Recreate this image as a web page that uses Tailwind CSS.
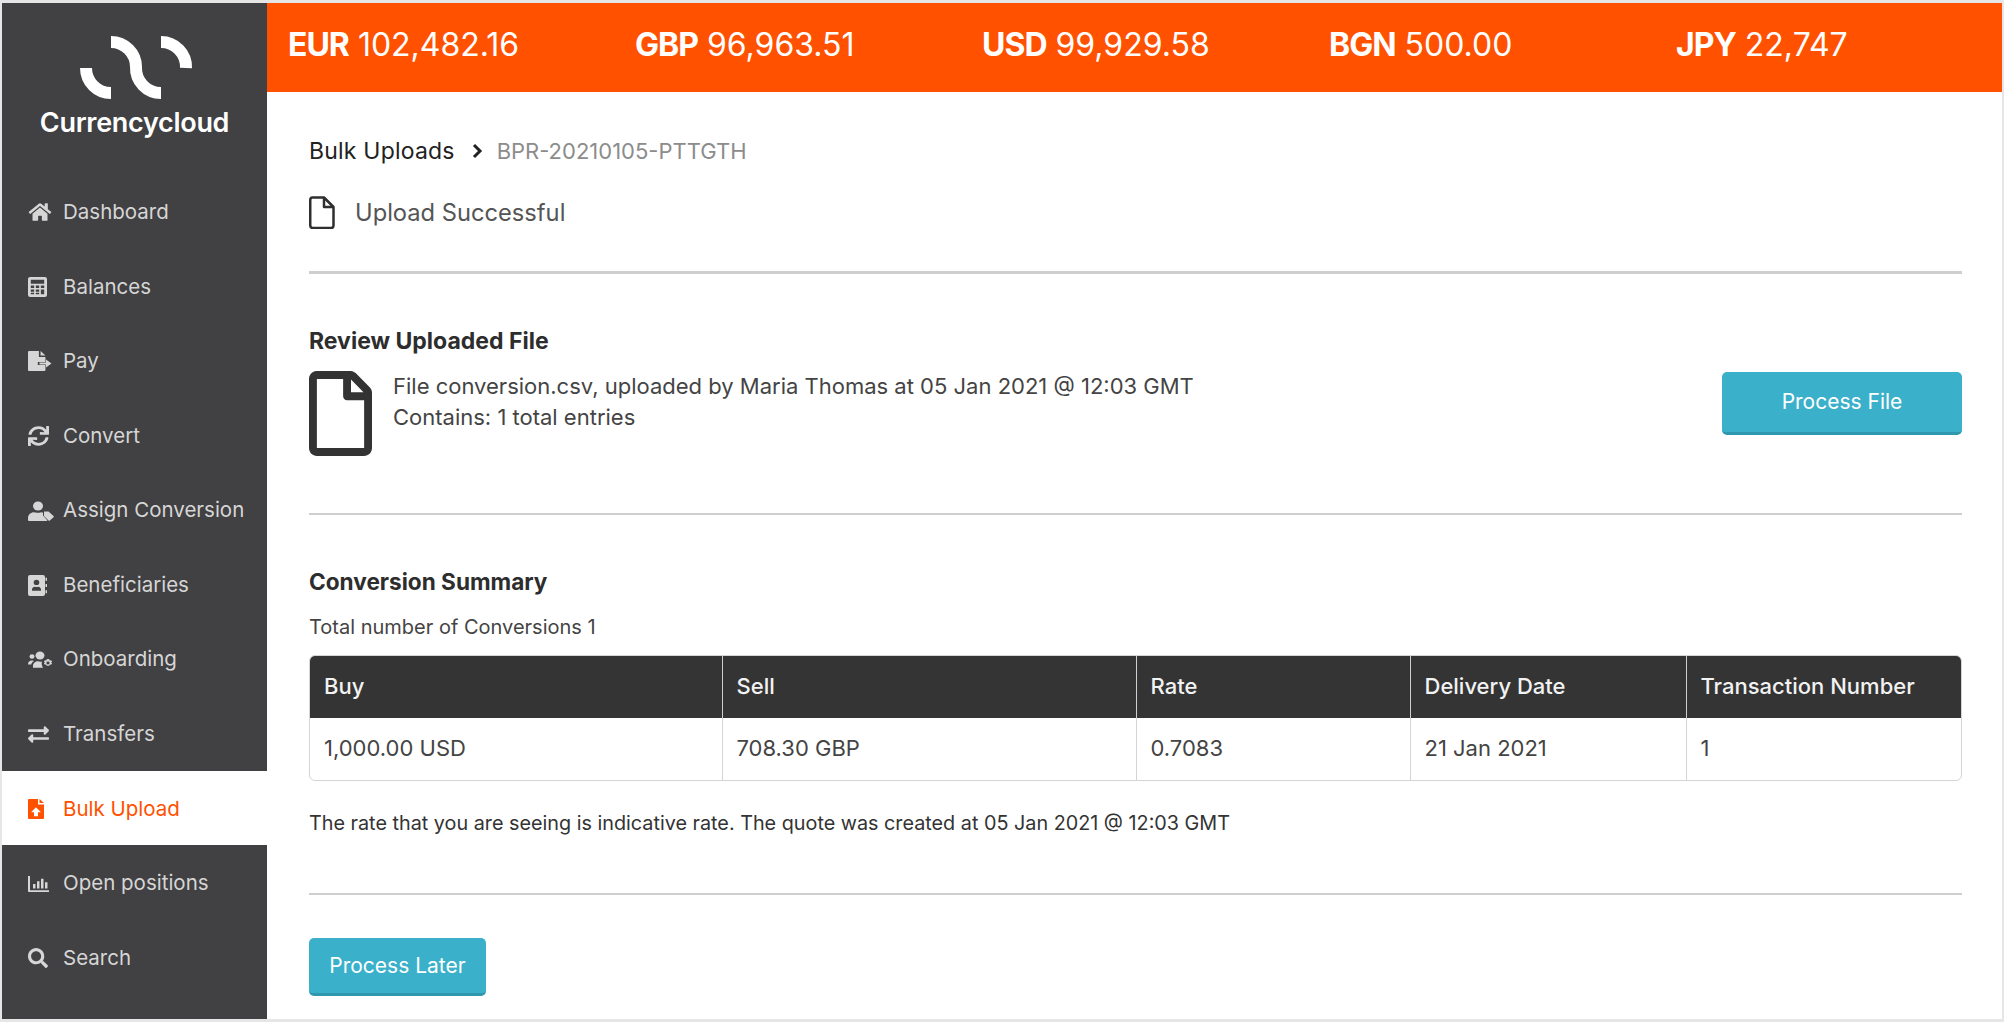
<!DOCTYPE html>
<html lang="en">
<head>
    <meta charset="UTF-8">
    <title>Bulk Upload</title>
    <script src="https://cdn.jsdelivr.net/npm/@tailwindcss/browser@4"></script>
</head>
<body class="bg-[#e6e6e6] font-['Inter',sans-serif] text-[#333]">
<div class="flex h-screen w-full overflow-hidden pt-[3px] pb-[3px] px-[2px]">

    <!-- Sidebar -->
    <aside class="w-[265px] shrink-0 bg-[#414042] flex flex-col text-[#d6d6d6]">
        <div class="h-[171px] flex flex-col items-center shrink-0">
            <svg class="mt-[32px] ml-[2px]" width="114" height="65" viewBox="78 35 114 65" fill="none" stroke="#fff" stroke-width="12">
                <path d="M85 68A25 25 0 0 0 110 93"/>
                <path d="M110 42A25 25 0 0 1 135 67A25 25 0 0 0 160 93"/>
                <path d="M160 42A25 25 0 0 1 185 68"/>
            </svg>
            <div class="mt-[5px] text-[27px] leading-[36px] font-semibold text-white tracking-[-0.3px]">Currencycloud</div>
        </div>
        <nav class="flex flex-col text-[20.5px]">
            <a class="h-[74.6px] flex items-center pl-[26px] pt-[2px]">
                <svg class="w-[24px] h-[20px] mr-[11px]" viewBox="0 0 576 512" fill="currentColor"><path d="M280.37 148.26L96 300.11V464a16 16 0 0 0 16 16l112.06-.29a16 16 0 0 0 15.92-16V368a16 16 0 0 1 16-16h64a16 16 0 0 1 16 16v95.64a16 16 0 0 0 16 16.05L464 480a16 16 0 0 0 16-16V300L295.67 148.26a12.19 12.19 0 0 0-15.3 0zM571.6 251.47L488 182.56V44.05a12 12 0 0 0-12-12h-56a12 12 0 0 0-12 12v72.61L318.47 43a48 48 0 0 0-61 0L4.34 251.47a12 12 0 0 0-1.6 16.9l25.5 31A12 12 0 0 0 45.15 301l235.22-193.74a12.19 12.19 0 0 1 15.3 0L530.9 301a12 12 0 0 0 16.9-1.6l25.5-31a12 12 0 0 0-1.7-16.93z"/></svg>
                Dashboard</a>
            <a class="h-[74.6px] flex items-center pl-[26px] pt-[2px]">
                <svg class="w-[19px] h-[20px] mr-[16px]" viewBox="2 0 17 21" preserveAspectRatio="none" fill="currentColor"><path fill-rule="evenodd" d="M4 0h13a2 2 0 0 1 2 2v17a2 2 0 0 1-2 2H4a2 2 0 0 1-2-2V2a2 2 0 0 1 2-2zM4.500 3v4h12V3zM4.500 9v2.500h3V9zM9 9v2.500h3V9zM13.500 9v2.500h3V9zM4.500 13v2.500h3V13zM9 13v2.500h3V13zM13.500 13v5h3v-5zM4.500 16.500V18h3v-1.500zM9 16.500V18h3v-1.500z"/></svg>
                Balances</a>
            <a class="h-[74.6px] flex items-center pl-[26px] pt-[2px]">
                <svg class="w-[24px] h-[22px] mr-[11px]" viewBox="2 0 22 22" preserveAspectRatio="none" fill="currentColor"><path d="M2 2a1 1 0 0 1 1-1h9v6h6v5h-7v3h7v5a1 1 0 0 1-1 1H3a1 1 0 0 1-1-1zM13.500 1l4.500 4.500h-4.500zM12.500 12.500h6V9.500l5 4-5 4v-3h-6z"/></svg>
                Pay</a>
            <a class="h-[74.6px] flex items-center pl-[26px] pt-[2px]">
                <svg class="w-[21px] h-[20px] mr-[14px]" viewBox="0 0 512 512" preserveAspectRatio="none" fill="currentColor"><path d="M440.65 12.57l4 82.77A247.16 247.16 0 0 0 255.83 8C134.73 8 33.91 94.92 12.29 209.82A12 12 0 0 0 24.09 224h49.05a12 12 0 0 0 11.67-9.26 175.91 175.91 0 0 1 317-56.94l-101.46-4.86a12 12 0 0 0-12.57 12v47.41a12 12 0 0 0 12 12H500a12 12 0 0 0 12-12V12a12 12 0 0 0-12-12h-47.37a12 12 0 0 0-11.98 12.57zM255.83 432a175.61 175.61 0 0 1-146-77.8l101.8 4.87a12 12 0 0 0 12.57-12v-47.4a12 12 0 0 0-12-12H12a12 12 0 0 0-12 12V500a12 12 0 0 0 12 12h47.35a12 12 0 0 0 12-12.6l-4.15-82.57A247.17 247.17 0 0 0 255.83 504c121.11 0 221.93-86.92 243.55-201.82a12 12 0 0 0-11.8-14.18h-49.05a12 12 0 0 0-11.67 9.26A175.86 175.86 0 0 1 255.83 432z"/></svg>
                Convert</a>
            <a class="h-[74.6px] flex items-center pl-[26px] pt-[2px]">
                <svg class="w-[26px] h-[20px] mr-[9px]" viewBox="0 0 26 22" preserveAspectRatio="none" fill="currentColor"><circle cx="10" cy="5.500" r="5"/><path d="M1 22a1 1 0 0 1-1-1v-2c0-4 3-6.500 6-6.500 1.500.6 6.500.6 8 0l1 .5v3l4.500 5.500-1 .5z"/><path d="M16 11.500h4.500l5 5a1 1 0 0 1 0 1.400l-3.600 3.600a1 1 0 0 1-1.400 0l-4.500-5z"/></svg>
                Assign Conversion</a>
            <a class="h-[74.6px] flex items-center pl-[26px] pt-[2px]">
                <svg class="w-[19px] h-[21px] mr-[16px]" viewBox="2 0 19 22" preserveAspectRatio="none" fill="currentColor"><path fill-rule="evenodd" d="M4 0h13a2 2 0 0 1 2 2v18a2 2 0 0 1-2 2H4a2 2 0 0 1-2-2V2a2 2 0 0 1 2-2zM10.500 5a2.800 2.800 0 1 0 0 5.600 2.800 2.800 0 0 0 0-5.600zM6 16.500h9v-1.300c0-1.700-1.500-3-3-3-.9.400-2.100.400-3 0-1.500 0-3 1.300-3 3z"/><path d="M19.500 3h1.500v3h-1.500zM19.500 9.500h1.500v3h-1.500zM19.500 16h1.500v3h-1.500z"/></svg>
                Beneficiaries</a>
            <a class="h-[74.6px] flex items-center pl-[26px] pt-[2px]">
                <svg class="w-[26px] h-[18px] mr-[9px]" viewBox="0 0 26 20" preserveAspectRatio="none" fill="currentColor"><circle cx="12" cy="5" r="4.500"/><circle cx="4" cy="6" r="2.500"/><path d="M0 15c0-3 1.500-4.500 4-4.500 1 0 1.500.3 2 .7-1.500 1-2.500 2.500-2.800 3.800z"/><path d="M5 18.500v-2c0-3 2.500-5 5-5 1.500.6 3 .6 4 .3-.5 2-.5 4.500 1 6.700z"/><path fill-rule="evenodd" d="M20 9l1.300.3.400 1.300 1.400-.4 1 1.500-1 1 1 1-1 1.600-1.400-.4-.4 1.400-1.300.2-1.300-.2-.4-1.400-1.400.4-1-1.600 1-1-1-1 1-1.500 1.400.4.400-1.300zM20 11.700a1.600 1.600 0 1 0 0 3.200 1.600 1.600 0 0 0 0-3.200z"/></svg>
                Onboarding</a>
            <a class="h-[74.6px] flex items-center pl-[26px] pt-[2px]">
                <svg class="w-[21px] h-[21px] mr-[14px]" viewBox="0 0 512 512" fill="currentColor"><path d="M0 168v-16c0-13.255 10.745-24 24-24h360V80c0-21.367 25.899-32.042 40.971-16.971l80 80c9.372 9.373 9.372 24.569 0 33.941l-80 80C409.956 271.982 384 261.456 384 240v-48H24c-13.255 0-24-10.745-24-24zm488 152H128v-48c0-21.314-25.862-32.08-40.971-16.971l-80 80c-9.372 9.373-9.372 24.569 0 33.941l80 80C102.057 463.997 128 453.437 128 432v-48h360c13.255 0 24-10.745 24-24v-16c0-13.255-10.745-24-24-24z"/></svg>
                Transfers</a>
            <a class="h-[74.6px] flex items-center pl-[26px] pt-[2px] bg-white text-[#ff5100]">
                <svg class="w-[16px] h-[20px] mr-[19px]" viewBox="2 0 16 22" preserveAspectRatio="none" fill="currentColor"><path fill-rule="evenodd" d="M3 0h9v6h6v15a1 1 0 0 1-1 1H3a1 1 0 0 1-1-1V1a1 1 0 0 1 1-1zM10 9l-5 5.500h3V19h4v-4.500h3z"/><path d="M13.500 0L18 4.500h-4.500z"/></svg>
                Bulk Upload</a>
            <a class="h-[74.6px] flex items-center pl-[26px] pt-[2px]">
                <svg class="w-[21px] h-[16px] mr-[14px]" viewBox="1 1 21 18" preserveAspectRatio="none" fill="currentColor"><path d="M1 1h2v16h19v2H2a1 1 0 0 1-1-1z"/><path d="M6 10h2.500v5H6zM10 7h2.500v8H10zM14 4h2.500v11H14zM18 8h2.500v7H18z"/></svg>
                Open positions</a>
            <a class="h-[74.6px] flex items-center pl-[26px] pt-[2px]">
                <svg class="w-[20px] h-[20px] mr-[15px]" viewBox="0 0 512 512" fill="currentColor"><path d="M505 442.7L405.3 343c-4.500-4.500-10.600-7-17-7H372c27.600-35.300 44-79.700 44-128C416 93.100 322.900 0 208 0S0 93.100 0 208s93.100 208 208 208c48.300 0 92.700-16.400 128-44v16.300c0 6.400 2.500 12.500 7 17l99.700 99.700c9.400 9.400 24.600 9.400 33.900 0l28.300-28.300c9.400-9.400 9.400-24.600.1-34zM208 336c-70.700 0-128-57.200-128-128 0-70.700 57.200-128 128-128 70.700 0 128 57.200 128 128 0 70.700-57.200 128-128 128z"/></svg>
                Search</a>
        </nav>
    </aside>

    <!-- Main -->
    <main class="flex-1 bg-white flex flex-col min-w-0">
        <!-- Balances -->
        <header class="h-[89px] shrink-0 bg-[#ff5100] text-white grid grid-cols-5 items-center text-[32px] leading-[40px] pb-[5px]">
            <div class="pl-[21px]"><b class="font-bold tracking-[-1px]">EUR</b> 102,482.16</div>
            <div class="pl-[21px]"><b class="font-bold tracking-[-1px]">GBP</b> 96,963.51</div>
            <div class="pl-[21px]"><b class="font-bold tracking-[-1px]">USD</b> 99,929.58</div>
            <div class="pl-[21px]"><b class="font-bold tracking-[-1px]">BGN</b> 500.00</div>
            <div class="pl-[21px]"><b class="font-bold tracking-[-1px]">JPY</b> 22,747</div>
        </header>

        <div class="pl-[42px] pr-[40px] pt-[44px]">
            <!-- Breadcrumb -->
            <div class="flex items-center h-[30px]">
                <span class="text-[23px] tracking-[0.2px] text-[#222]">Bulk Uploads</span>
                <svg class="w-[12px] h-[16px] ml-[16px] mr-[14px]" viewBox="0 0 12 16" fill="none" stroke="#222" stroke-width="3"><path d="M3 2l6 6-6 6"/></svg>
                <span class="text-[22px] text-[#8c8c8c]">BPR-20210105-PTTGTH</span>
            </div>
            <div class="flex items-center mt-[30px] h-[33px]">
                <svg class="w-[26px] h-[33px]" viewBox="0 0 26 33" fill="none" stroke="#2f2f2f" stroke-width="2.500" stroke-linejoin="round"><path d="M3.500 1.500h11.500l9.500 9.500v18.500a2.500 2.500 0 0 1-2.500 2.500H3.500A2.500 2.500 0 0 1 1.250 29.500V4a2.500 2.500 0 0 1 2.250-2.500z"/><path d="M15 1.500v9.500h9.500"/></svg>
                <span class="ml-[20px] text-[23.7px] text-[#555]">Upload Successful</span>
            </div>
            <div class="mt-[42px] h-[2.500px] bg-[#cfcfcf]"></div>

            <!-- Review file -->
            <h2 class="mt-[52px] text-[23px] leading-[30px] font-bold text-[#2d2d2d]">Review Uploaded File</h2>
            <div class="mt-[15px] flex justify-between h-[85px]">
                <div class="flex">
                    <svg class="w-[63px] h-[85px]" viewBox="0 0 384 512" preserveAspectRatio="none" fill="#333"><path d="M369.900 97.900L286 14C277 5 264.800-.1 252.100-.1H48C21.500 0 0 21.500 0 48v416c0 26.500 21.500 48 48 48h288c26.500 0 48-21.500 48-48V131.900c0-12.700-5.100-25-14.100-34zM332.100 128H256V51.900l76.100 76.100zM48 464V48h160v104c0 13.300 10.700 24 24 24h104v288H48z"/></svg>
                    <div class="ml-[21px] text-[22px] leading-[31px] text-[#444]">
                        <p>File conversion.csv, uploaded by Maria Thomas at 05 Jan 2021 @ 12:03 GMT</p>
                        <p>Contains: 1 total entries</p>
                    </div>
                </div>
                <button class="w-[240px] h-[63px] mt-[1px] bg-[#3ab0ca] text-white text-[21px] rounded-[5px] border-b-[3px] border-[#2f97ae]">Process File</button>
            </div>
            <div class="mt-[57px] h-[2.500px] bg-[#cfcfcf]"></div>

            <!-- Summary -->
            <h2 class="mt-[52px] text-[22.6px] leading-[30px] font-bold text-[#2d2d2d]">Conversion Summary</h2>
            <p class="mt-[16px] text-[20px] leading-[28px] text-[#444]">Total number of Conversions 1</p>
            <div class="mt-[13.5px] rounded-[6px] border border-[#d4d4d4] overflow-hidden">
                <table class="w-full table-fixed border-collapse text-[22px] text-left">
                    <thead class="bg-[#343434] text-[#f2f2f2]">
                        <tr class="h-[62px]">
                            <th class="w-[412px] pl-[14px] font-medium">Buy</th>
                            <th class="w-[414px] pl-[14px] font-medium border-l border-[#cfcfcf]">Sell</th>
                            <th class="w-[274px] pl-[14px] font-medium border-l border-[#cfcfcf]">Rate</th>
                            <th class="w-[276px] pl-[14px] font-medium border-l border-[#cfcfcf]">Delivery Date</th>
                            <th class="pl-[14px] font-medium border-l border-[#cfcfcf]">Transaction Number</th>
                        </tr>
                    </thead>
                    <tbody class="text-[#444]">
                        <tr class="h-[62px]">
                            <td class="pl-[14px]">1,000.00 USD</td>
                            <td class="pl-[14px] border-l border-[#d4d4d4]">708.30 GBP</td>
                            <td class="pl-[14px] border-l border-[#d4d4d4]">0.7083</td>
                            <td class="pl-[14px] border-l border-[#d4d4d4]">21 Jan 2021</td>
                            <td class="pl-[14px] border-l border-[#d4d4d4]">1</td>
                        </tr>
                    </tbody>
                </table>
            </div>
            <p class="mt-[28px] text-[19.8px] leading-[28px] text-[#333]">The rate that you are seeing is indicative rate. The quote was created at 05 Jan 2021 @ 12:03 GMT</p>
            <div class="mt-[56px] h-[2.500px] bg-[#cfcfcf]"></div>
            <button class="mt-[43px] w-[177px] h-[58px] bg-[#3ab0ca] text-white text-[21px] rounded-[5px] border-b-[3px] border-[#2f97ae]">Process Later</button>
        </div>
    </main>
</div>
</body>
</html>
